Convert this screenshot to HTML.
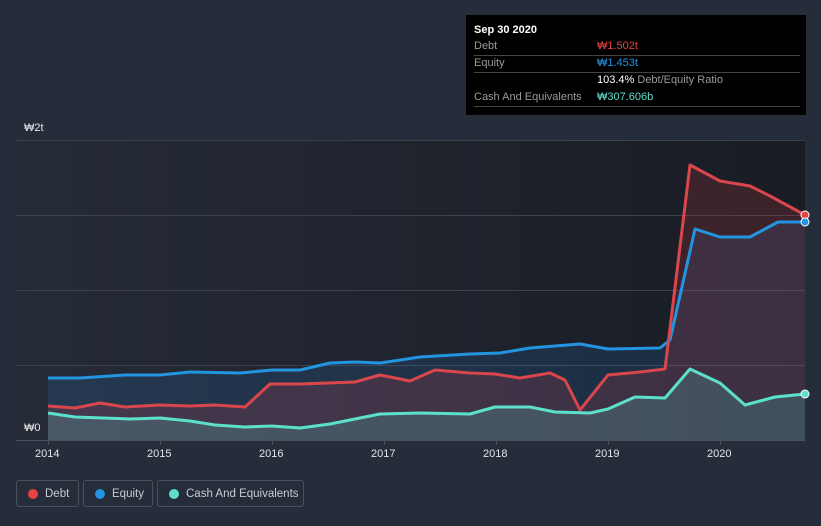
<!DOCTYPE html>
<html><head><style>
html,body{margin:0;width:821px;height:526px;overflow:hidden}
body{background:#262d3a;font-family:"Liberation Sans",sans-serif;position:relative}
.tt{position:absolute;left:466px;top:15px;width:340px;height:100px;background:#000;color:#9a9a9a;font-size:11px}
.tt .r{position:absolute;left:8px;width:326px;border-bottom:1px solid #444;height:17px;line-height:17px}
.lg{position:absolute;top:480px;height:27px;border:1px solid #4a505c;border-radius:3px;color:#c8ccd2;font-size:11.5px;line-height:26px;box-sizing:border-box;white-space:nowrap}
.lg i{position:absolute;left:11px;top:8px;width:10px;height:10px;border-radius:50%}
.lg span{position:absolute;left:28px}
.ax{position:absolute;color:#e6e6e6;font-size:11px}
</style></head><body>
<svg width="821" height="526" style="position:absolute;left:0;top:0">
<defs><linearGradient id="bg" x1="0" x2="1"><stop offset="0" stop-color="#252b37"/><stop offset="1" stop-color="#191c23"/></linearGradient></defs>
<rect x="16" y="140" width="789" height="300" fill="url(#bg)"/>
<g stroke="#3c414c" stroke-width="1"><line x1="16" y1="140.5" x2="805" y2="140.5"/><line x1="16" y1="215.5" x2="805" y2="215.5"/><line x1="16" y1="290.5" x2="805" y2="290.5"/><line x1="16" y1="365.5" x2="805" y2="365.5"/><line x1="16" y1="440.5" x2="805" y2="440.5" stroke="#4a505c"/></g>
<g stroke="#4a505c"><line x1="48.5" y1="440" x2="48.5" y2="445"/><line x1="160.5" y1="440" x2="160.5" y2="445"/><line x1="272.5" y1="440" x2="272.5" y2="445"/><line x1="384.5" y1="440" x2="384.5" y2="445"/><line x1="496.5" y1="440" x2="496.5" y2="445"/><line x1="608.5" y1="440" x2="608.5" y2="445"/><line x1="720.5" y1="440" x2="720.5" y2="445"/></g>
<path d="M48,378 L80,378 125,375 160,375 190,372 240,373 272,370 300,370 330,363 355,362 380,363 420,357 470,354 500,353 530,348 580,344 608,349 660,348 670,340 695,229 720,237 750,237 778,222 805,222 L805,440 48,440Z" fill="rgba(40,130,220,0.16)"/>
<path d="M48,406 L75,408 100,403 125,407 160,405 190,406 215,405 245,407 270,384 300,384 355,382 380,375 410,381 435,370 470,373 495,374 520,378 550,373 565,380 580,410 608,375 640,372 665,369 690,165 720,181 750,186 770,196 805,215 L805,440 48,440Z" fill="rgba(200,60,70,0.2)"/>
<path d="M48,413 L75,417 130,419 160,418 190,421 215,425 245,427 272,426 300,428 330,424 380,414 420,413 470,414 495,407 530,407 555,412 590,413 608,409 635,397 665,398 690,369 720,383 745,405 775,397 805,394 L805,440 48,440Z" fill="rgba(90,200,190,0.22)"/>
<g fill="none" stroke-width="3" stroke-linejoin="round">
<path d="M48,378 L80,378 125,375 160,375 190,372 240,373 272,370 300,370 330,363 355,362 380,363 420,357 470,354 500,353 530,348 580,344 608,349 660,348 670,340 695,229 720,237 750,237 778,222 805,222" stroke="#2394e0"/>
<path d="M48,406 L75,408 100,403 125,407 160,405 190,406 215,405 245,407 270,384 300,384 355,382 380,375 410,381 435,370 470,373 495,374 520,378 550,373 565,380 580,410 608,375 640,372 665,369 690,165 720,181 750,186 770,196 805,215" stroke="#d9464c"/>
<path d="M48,413 L75,417 130,419 160,418 190,421 215,425 245,427 272,426 300,428 330,424 380,414 420,413 470,414 495,407 530,407 555,412 590,413 608,409 635,397 665,398 690,369 720,383 745,405 775,397 805,394" stroke="#5ce0cc"/>
</g>
<circle cx="805" cy="215" r="4" fill="#e84142" stroke="#fff"/>
<circle cx="805" cy="222" r="4" fill="#2394e0" stroke="#fff"/>
<circle cx="805" cy="394" r="4" fill="#5ce0cc" stroke="#fff"/>
</svg>
<div class="ax" style="left:24px;top:122px">₩2t</div>
<div class="ax" style="left:24px;top:422px">₩0</div>
<div class="ax" style="left:35px;top:448px">2014</div>
<div class="ax" style="left:147px;top:448px">2015</div>
<div class="ax" style="left:259px;top:448px">2016</div>
<div class="ax" style="left:371px;top:448px">2017</div>
<div class="ax" style="left:483px;top:448px">2018</div>
<div class="ax" style="left:595px;top:448px">2019</div>
<div class="ax" style="left:707px;top:448px">2020</div>
<div class="tt">
<div style="position:absolute;left:8px;top:9px;color:#fff;font-weight:bold">Sep 30 2020</div>
<div class="r" style="top:23px">Debt<span style="position:absolute;left:123px;color:#e84142">₩1.502t</span></div>
<div class="r" style="top:40px">Equity<span style="position:absolute;left:123px;color:#2394e0">₩1.453t</span></div>
<div class="r" style="top:57px;border:0"><span style="position:absolute;left:123px"><b style="color:#fff;font-weight:normal">103.4%</b> Debt/Equity Ratio</span></div>
<div class="r" style="top:74px">Cash And Equivalents<span style="position:absolute;left:123px;color:#5ce0cc">₩307.606b</span></div>
</div>
<div class="lg" style="left:16px;width:63px"><i style="background:#e84142"></i><span>Debt</span></div>
<div class="lg" style="left:83px;width:70px"><i style="background:#2394e0"></i><span>Equity</span></div>
<div class="lg" style="left:157px;width:147px"><i style="background:#5ce0cc"></i><span>Cash And Equivalents</span></div>
</body></html>
